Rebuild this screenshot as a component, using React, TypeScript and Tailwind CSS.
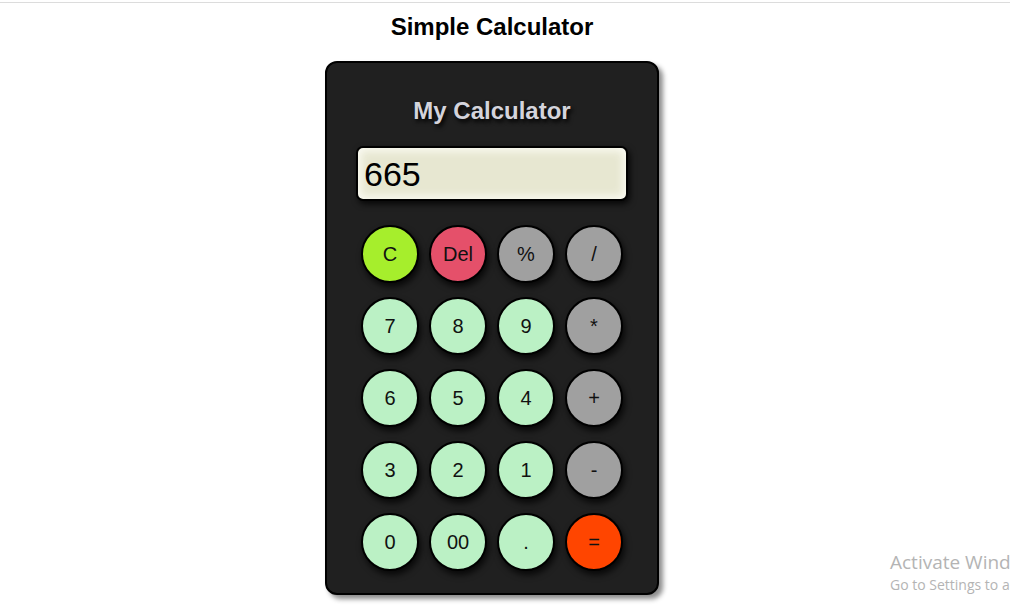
const keys: { label: string; color: string }[] = [
  { label: "C", color: "bg-[#a6ee2c]" },
  { label: "Del", color: "bg-[#e5506a]" },
  { label: "%", color: "bg-[#a0a0a0]" },
  { label: "/", color: "bg-[#a0a0a0]" },
  { label: "7", color: "bg-[#bbf1c5]" },
  { label: "8", color: "bg-[#bbf1c5]" },
  { label: "9", color: "bg-[#bbf1c5]" },
  { label: "*", color: "bg-[#a0a0a0]" },
  { label: "6", color: "bg-[#bbf1c5]" },
  { label: "5", color: "bg-[#bbf1c5]" },
  { label: "4", color: "bg-[#bbf1c5]" },
  { label: "+", color: "bg-[#a0a0a0]" },
  { label: "3", color: "bg-[#bbf1c5]" },
  { label: "2", color: "bg-[#bbf1c5]" },
  { label: "1", color: "bg-[#bbf1c5]" },
  { label: "-", color: "bg-[#a0a0a0]" },
  { label: "0", color: "bg-[#bbf1c5]" },
  { label: "00", color: "bg-[#bbf1c5]" },
  { label: ".", color: "bg-[#bbf1c5]" },
  { label: "=", color: "bg-[#ff4500]" },
];

const App = () => {
  return (
    <div className="relative w-[1010px] h-[611px] overflow-hidden bg-white font-['Liberation_Sans',Arial,sans-serif]">
      <div className="mt-[2px] h-px bg-[#dcdcdc]" />
      <div className="w-[984px] flex flex-col items-center">
        <h1 className="mt-[10px] text-[24px] leading-[28px] font-bold text-black">Simple Calculator</h1>

        <div className="mt-[20px] w-[334px] h-[534px] bg-[#202020] border-2 border-black rounded-[12px] shadow-[4px_4px_5px_rgba(0,0,0,0.45)] flex flex-col items-center pt-[34px]">
          <h2 className="text-[24px] leading-[28px] font-bold text-[#d4d4dc] [text-shadow:2px_3px_4px_#000]">
            My Calculator
          </h2>

          <div className="mt-[21px] w-[272px] h-[55px] rounded-[7px] border-2 border-black bg-[#e7e7d1] shadow-[inset_0_0_8px_3px_#fbfbf3,2px_3px_6px_rgba(0,0,0,0.8)] flex items-center px-[6px]">
            <span className="text-[34px] leading-none text-black">665</span>
          </div>

          <div className="mt-[24px] grid grid-cols-[repeat(4,58px)] gap-x-[10px] gap-y-[14px]">
            {keys.map((k) => (
              <button
                key={k.label}
                className={`w-[58px] h-[58px] rounded-full border-2 border-black ${k.color} text-[20px] text-[#111] shadow-[2px_4px_6px_rgba(0,0,0,0.75)] flex items-center justify-center`}
              >
                {k.label}
              </button>
            ))}
          </div>
        </div>
      </div>

      <div className="absolute left-[890px] top-[550px] whitespace-nowrap font-['Open_Sans',sans-serif] text-[#b4b4b4]">
        <div className="text-[19px] leading-[25px]">Activate Windows</div>
        <div className="text-[14px] leading-[20px]">Go to Settings to activate Windows.</div>
      </div>
    </div>
  );
};

export default App;
